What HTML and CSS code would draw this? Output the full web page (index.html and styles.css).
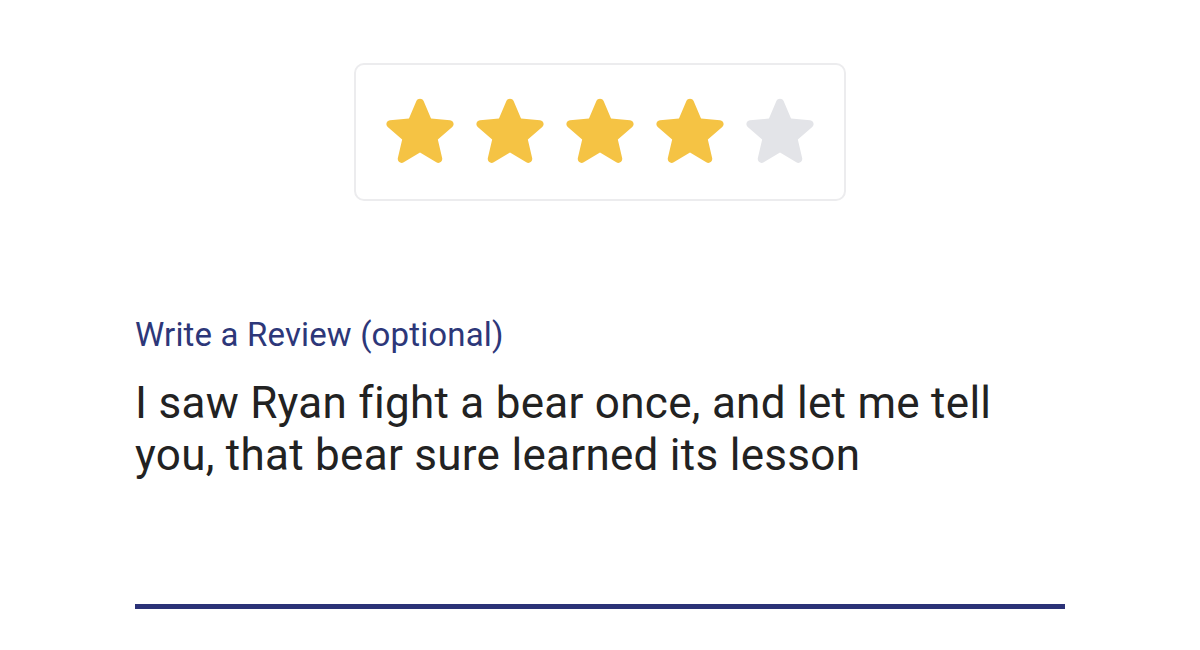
FILE: index.html
```html
<!DOCTYPE html>
<html lang="en">
<head>
<meta charset="utf-8">
<title>Write a Review</title>
<link rel="stylesheet" href="styles.css">
</head>
<body>
  <div class="rating-card">
    <svg class="star star-on" viewBox="3.35 2.89 17.3 17.06"><path d="M12 17.27l4.15 2.51c.76.46 1.69-.22 1.49-1.08l-1.1-4.72 3.67-3.18c.67-.58.31-1.68-.57-1.75l-4.83-.41-1.89-4.46c-.34-.81-1.5-.81-1.840 0L9.19 8.63l-4.83.41c-.88.07-1.24 1.17-.57 1.75l3.67 3.18-1.1 4.72c-.2.86.73 1.54 1.49 1.08l4.15-2.5z"/></svg>
    <svg class="star star-on" viewBox="3.35 2.89 17.3 17.06"><path d="M12 17.27l4.15 2.51c.76.46 1.69-.22 1.49-1.08l-1.1-4.72 3.67-3.18c.67-.58.31-1.68-.57-1.75l-4.83-.41-1.89-4.46c-.34-.81-1.5-.81-1.84 0L9.19 8.63l-4.83.41c-.88.07-1.24 1.17-.57 1.75l3.67 3.18-1.1 4.72c-.2.86.73 1.54 1.49 1.08l4.15-2.5z"/></svg>
    <svg class="star star-on" viewBox="3.35 2.89 17.3 17.06"><path d="M12 17.27l4.15 2.51c.76.46 1.69-.22 1.49-1.08l-1.1-4.72 3.67-3.18c.67-.58.31-1.68-.57-1.75l-4.83-.41-1.89-4.46c-.34-.81-1.5-.81-1.84 0L9.19 8.63l-4.83.41c-.88.07-1.24 1.17-.57 1.75l3.67 3.18-1.1 4.72c-.2.86.73 1.54 1.49 1.08l4.15-2.5z"/></svg>
    <svg class="star star-on" viewBox="3.35 2.89 17.3 17.06"><path d="M12 17.27l4.15 2.51c.76.46 1.69-.22 1.49-1.08l-1.1-4.72 3.67-3.18c.67-.58.31-1.68-.57-1.75l-4.83-.41-1.89-4.46c-.34-.81-1.5-.81-1.84 0L9.19 8.63l-4.83.41c-.88.07-1.24 1.17-.57 1.75l3.67 3.18-1.1 4.72c-.2.86.73 1.54 1.49 1.08l4.15-2.5z"/></svg>
    <svg class="star star-off" viewBox="3.35 2.89 17.3 17.06"><path d="M12 17.27l4.15 2.51c.76.46 1.69-.22 1.49-1.08l-1.1-4.72 3.67-3.18c.67-.58.31-1.68-.57-1.75l-4.83-.41-1.89-4.46c-.34-.81-1.5-.81-1.84 0L9.19 8.63l-4.83.41c-.88.07-1.24 1.17-.57 1.75l3.67 3.18-1.1 4.72c-.2.86.73 1.54 1.49 1.08l4.15-2.5z"/></svg>
  </div>

  <div class="review">
    <div class="review-label">Write a Review (optional)</div>
    <div class="review-text">I saw Ryan fight a bear once, and let me tell you, that bear sure learned its lesson</div>
  </div>
</body>
</html>
```

FILE: styles.css
```css
html, body {
  margin: 0;
  padding: 0;
  background: #ffffff;
}

body {
  font-family: Roboto, "Noto Sans", Arial, sans-serif;
}

.rating-card {
  box-sizing: border-box;
  width: 492px;
  height: 138px;
  margin: 63px auto 0;
  padding-bottom: 6px;
  border: 2px solid #ececee;
  border-radius: 10px;
  display: flex;
  justify-content: center;
  align-items: center;
  gap: 22px;
}

.star {
  width: 68px;
  height: 67px;
  display: block;
}

.star-on {
  fill: #f5c344;
}

.star-off {
  fill: #e3e4e8;
}

.review {
  width: 930px;
  margin: 115px auto 0;
}

.review-label {
  font-size: 33px;
  line-height: 38px;
  letter-spacing: 0.15px;
  color: #2d3779;
}

.review-text {
  margin-top: 23px;
  font-size: 44px;
  line-height: 52px;
  letter-spacing: 0.28px;
  color: #222222;
  padding-bottom: 123px;
  border-bottom: 5px solid #2b3277;
}
```
